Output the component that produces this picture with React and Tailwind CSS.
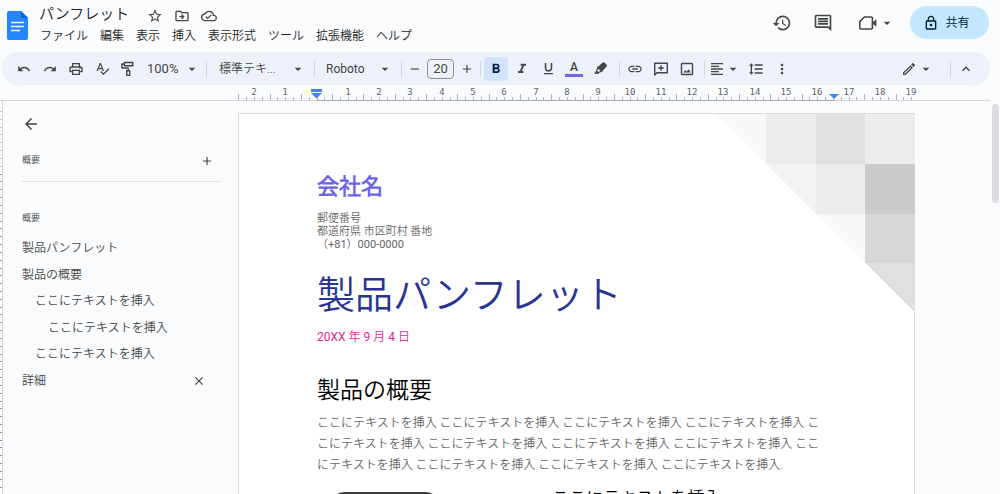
import {
  MdAdd,
  MdArrowBack,
  MdArrowDropDown,
  MdClose,
  MdFormatAlignLeft,
  MdFormatBold,
  MdFormatItalic,
  MdFormatLineSpacing,
  MdFormatUnderlined,
  MdHistory,
  MdKeyboardArrowUp,
  MdLink,
  MdMoreVert,
  MdOutlineCloudDone,
  MdOutlineComment,
  MdOutlineDriveFileMove,
  MdOutlineEdit,
  MdOutlineLock,
  MdOutlinePrint,
  MdRedo,
  MdRemove,
  MdSpellcheck,
  MdStarBorder,
  MdUndo,
} from 'react-icons/md';

const MENUS = ['ファイル', '編集', '表示', '挿入', '表示形式', 'ツール', '拡張機能', 'ヘルプ'];

const OUTLINE = [
  { label: '製品パンフレット', indent: 'pl-0' },
  { label: '製品の概要', indent: 'pl-0' },
  { label: 'ここにテキストを挿入', indent: 'pl-[13px]' },
  { label: 'ここにテキストを挿入', indent: 'pl-[26px]' },
  { label: 'ここにテキストを挿入', indent: 'pl-[13px]' },
  { label: '詳細', indent: 'pl-0', closable: true },
];

const BODY_TEXT = `${Array(12).fill('ここにテキストを挿入').join(' ')}.`;

const DocsLogo = () => (
  <svg viewBox="0 0 21 29" className="h-[29px] w-[21px] shrink-0">
    <path d="M2 0h12l7 7v20a2 2 0 0 1-2 2H2a2 2 0 0 1-2-2V2a2 2 0 0 1 2-2z" fill="#2684fc" />
    <path d="M14 0l7 7h-7z" fill="#0066da" />
    <path d="M4 11.5h13M4 15.5h13M4 19.5h9" stroke="#fff" strokeWidth="1.4" />
  </svg>
);

const PaintRollerIcon = () => (
  <svg viewBox="0 0 16 16" className="size-4" fill="none" stroke="currentColor" strokeWidth="1.4">
    <path d="M4.4 1.5h8.4v3.2H4.4zM4.4 3H2v4h6.2v2.6M6.7 9.8h3v4.6h-3z" strokeLinejoin="round" />
  </svg>
);

const HighlighterIcon = () => (
  <svg viewBox="0 0 16 16" className="size-4" fill="none" stroke="currentColor" strokeWidth="1.3">
    <path d="M5 6.400l-1.200 3.400L2.400 12h2.800l.8-.8 2.800-1z" />
    <path d="M2 12.600l1.800-2.800 2 1.800-.8 1z" fill="currentColor" strokeWidth="0" />
    <path d="M9.800 2.200a1 1 0 0 1 1.400 0l1.800 1.700a1 1 0 0 1 0 1.400L8.800 9.700 5.200 6.400z" fill="currentColor" />
  </svg>
);

const AddCommentIcon = () => (
  <svg viewBox="0 0 16 16" className="size-4" fill="none" stroke="currentColor" strokeWidth="1.4">
    <path d="M1.7 14V2.2h12.6v9.6H3.9z" strokeLinejoin="round" />
    <path d="M8 4.2v5.6M5.2 7h5.6" />
  </svg>
);

const ImageIcon = () => (
  <svg viewBox="0 0 16 16" className="size-4" fill="none" stroke="currentColor" strokeWidth="1.4">
    <rect x="2.5" y="2.5" width="11" height="11" rx="0.8" />
    <path d="M4.5 11.5l1.8-2.4 1.4 1.6 1.9-2.4 2.2 3.2z" fill="currentColor" strokeWidth="0" />
  </svg>
);

const VideoIcon = () => (
  <svg viewBox="0 0 20 20" className="size-5" fill="none" stroke="currentColor" strokeWidth="1.6">
    <path d="M6.4 4h6.8a1.2 1.2 0 0 1 1.2 1.2v9.6a1.2 1.2 0 0 1-1.2 1.2H3a1.2 1.2 0 0 1-1.2-1.2V8.6z" strokeLinejoin="round" />
    <path d="M14.2 9.8l4.2-3.6v7.6l-4.2-3.4z" fill="currentColor" strokeWidth="0" />
  </svg>
);

const Caret = () => <MdArrowDropDown className="pointer-events-none size-4 shrink-0" />;

const Divider = () => <span className="h-4 w-px shrink-0 bg-[#d3d6dc]" />;

const ToolButton = ({ label, className = 'w-[26px]', children }) => (
  <button
    type="button"
    aria-label={label}
    className={`flex h-6 shrink-0 items-center justify-center rounded ${className}`}
  >
    {children}
  </button>
);

const ToolSelect = ({ label, value, className, textClass }) => (
  <label className={`flex shrink-0 items-center ${className}`}>
    <select aria-label={label} className={`min-w-0 flex-1 appearance-none bg-transparent ${textClass}`}>
      <option>{value}</option>
    </select>
    <Caret />
  </label>
);

const Header = () => (
  <header className="flex h-[52px] shrink-0 items-start pl-[7px] pr-[11px]">
    <div className="pt-[11px]">
      <DocsLogo />
    </div>
    <div className="ml-[11px]">
      <div className="flex h-7 items-center">
        <h1 className="text-[15px] leading-7 text-[#1f1f1f]">パンフレット</h1>
        <div className="ml-[18px] mt-1 flex gap-[11px] text-[#444746]">
          <button type="button" aria-label="スター">
            <MdStarBorder className="size-4" />
          </button>
          <button type="button" aria-label="移動">
            <MdOutlineDriveFileMove className="size-4" />
          </button>
          <button type="button" aria-label="保存済み">
            <MdOutlineCloudDone className="size-4" />
          </button>
        </div>
      </div>
      <nav className="ml-px flex gap-3 text-xs text-[#1f1f1f]">
        {MENUS.map((menu) => (
          <button key={menu} type="button" className="whitespace-nowrap">
            {menu}
          </button>
        ))}
      </nav>
    </div>
    <div className="ml-auto flex items-center pt-[6px] text-[#444746]">
      <button type="button" aria-label="変更履歴">
        <MdHistory className="size-5" />
      </button>
      <button type="button" aria-label="コメント" className="ml-[21px]">
        <MdOutlineComment className="size-5" />
      </button>
      <button type="button" aria-label="ビデオ通話" className="ml-[25px] flex items-center gap-px">
        <VideoIcon />
        <Caret />
      </button>
      <button
        type="button"
        className="ml-[15px] flex h-[33px] w-[79px] items-center justify-center gap-[6px] rounded-full bg-[#c2e7ff] pr-[6px] text-xs text-[#001d35]"
      >
        <MdOutlineLock className="size-4" />
        共有
      </button>
    </div>
  </header>
);

const Toolbar = () => (
  <div className="ml-[2px] mr-[10px] flex h-[33px] shrink-0 items-center rounded-full bg-[#edf2fa] pl-[9px] pr-[11px] text-[#444746]">
    <ToolButton label="元に戻す"><MdUndo className="size-[14px]" /></ToolButton>
    <ToolButton label="やり直し"><MdRedo className="size-[14px]" /></ToolButton>
    <ToolButton label="印刷"><MdOutlinePrint className="size-4" /></ToolButton>
    <ToolButton label="スペルチェック"><MdSpellcheck className="size-[15px]" /></ToolButton>
    <ToolButton label="書式を貼り付け"><PaintRollerIcon /></ToolButton>
    <ToolSelect label="ズーム" value="100%" className="w-[65px] pl-[6px] pr-[6px]" textClass="text-[13px] font-normal" />
    <Divider />
    <ToolSelect label="スタイル" value="標準テキ..." className="w-[107px] pl-3 pr-2" textClass="text-xs" />
    <Divider />
    <ToolSelect label="フォント" value="Roboto" className="w-[86px] pl-[11px] pr-2" textClass="text-xs font-normal" />
    <Divider />
    <ToolButton label="縮小" className="w-[25px]"><MdRemove className="size-[14px]" /></ToolButton>
    <input
      aria-label="フォントサイズ"
      defaultValue="20"
      className="h-5 w-[27px] rounded border border-[#8e918f] bg-transparent text-center text-[13px] font-normal"
    />
    <ToolButton label="拡大"><MdAdd className="size-[14px]" /></ToolButton>
    <Divider />
    <ToolButton label="太字" className="ml-[3px] w-6 bg-[#d3e3fd] text-[#041e49]">
      <MdFormatBold className="size-4" />
    </ToolButton>
    <ToolButton label="斜体" className="ml-px w-[26px]"><MdFormatItalic className="size-4" /></ToolButton>
    <ToolButton label="下線"><MdFormatUnderlined className="size-[15px]" /></ToolButton>
    <ToolButton label="文字色">
      <span className="flex w-[18px] flex-col items-center border-b-[3px] border-[#7166e8] text-xs font-medium leading-[13px]">A</span>
    </ToolButton>
    <ToolButton label="ハイライト" className="mr-1 w-[28px]"><HighlighterIcon /></ToolButton>
    <Divider />
    <ToolButton label="リンク" className="ml-[2px] w-[26px]"><MdLink className="size-4" /></ToolButton>
    <ToolButton label="コメントを追加"><AddCommentIcon /></ToolButton>
    <ToolButton label="画像"><ImageIcon /></ToolButton>
    <span className="w-1" />
    <Divider />
    <ToolButton label="配置" className="ml-[2px] w-[36px]">
      <MdFormatAlignLeft className="size-4" />
      <Caret />
    </ToolButton>
    <ToolButton label="行間隔"><MdFormatLineSpacing className="size-4" /></ToolButton>
    <ToolButton label="その他"><MdMoreVert className="size-4" /></ToolButton>
    <div className="ml-auto flex items-center">
      <ToolButton label="編集モード" className="mr-4 gap-px">
        <MdOutlineEdit className="size-4" />
        <Caret />
      </ToolButton>
      <Divider />
      <ToolButton label="メニューを隠す" className="ml-[2px] w-[26px]">
        <MdKeyboardArrowUp className="size-4" />
      </ToolButton>
    </div>
  </div>
);

// Units are quarter centimetres, the zero point sits at the left margin
const CM = 31.3;
const ZERO = 78.5;

const HorizontalRuler = () => {
  const ticks = Array.from({ length: 87 }, (_, i) => i - 10);
  return (
    <div className="mr-[10px] flex h-4 shrink-0 border-b border-[#d5d7db] pl-[238px]">
      <svg viewBox="0 0 677 16" className="h-4 w-[677px] shrink-0 overflow-visible">
        {ticks.map((k) => {
          const x = Math.round(ZERO + (k * CM) / 4);
          const major = Math.abs(k % 4) === 2;
          return (
            <rect key={k} x={x} y={major ? 9 : 12} width="1" height={major ? 6 : 3} fill="#b0b3b8" />
          );
        })}
        <rect x="79" y="15" width="518" height="1" fill="#a8abb0" />
        {[-2, -1, ...Array.from({ length: 19 }, (_, i) => i + 1)].map((n) => (
          <text
            key={n}
            x={Math.round(ZERO + n * CM)}
            y="10"
            textAnchor="middle"
            className="fill-[#5f6368] font-['DejaVu_Sans_Mono',monospace] text-[9px]"
          >
            {Math.abs(n)}
          </text>
        ))}
        <path d="M73 4h11v3H73zM73 8h11l-5.500 5.500z" fill="#4285f4" />
        <path d="M591 9h10l-5 5z" fill="#4285f4" />
      </svg>
    </div>
  );
};

const VerticalRuler = () => (
  <svg className="h-full w-[2px] shrink-0">
    {Array.from({ length: 50 }, (_, i) => (
      <rect key={i} x="0" y={10 + Math.round((i * CM) / 4)} width="2" height="1" fill={i < 8 ? '#c4c6ca' : '#8f9297'} />
    ))}
  </svg>
);

const Sidebar = () => (
  <aside className="w-[236px] shrink-0 border-l border-[#d5d7db] pl-[19px] pr-[17px] text-[#444746]">
    <button type="button" aria-label="戻る" className="mt-[14px] block">
      <MdArrowBack className="size-[18px]" />
    </button>
    <div className="mt-4 flex h-6 items-center justify-between pr-[7px]">
      <h2 className="text-[9px]">概要</h2>
      <button type="button" aria-label="概要を追加">
        <MdAdd className="size-[14px]" />
      </button>
    </div>
    <hr className="mt-2 border-[#dfe1e5]" />
    <h2 className="mt-[28px] text-[9px] leading-4">概要</h2>
    <ul className="mt-[9px] grid h-[159px] auto-rows-fr text-xs">
      {OUTLINE.map((item, i) => (
        <li key={i} className={`flex items-center justify-between pr-[15px] ${item.indent}`}>
          <a href="#">{item.label}</a>
          {item.closable && (
            <button type="button" aria-label="削除">
              <MdClose className="size-[14px]" />
            </button>
          )}
        </li>
      ))}
    </ul>
  </aside>
);

const CornerPattern = () => (
  <svg viewBox="0 0 4 4" className="absolute -right-px top-0 size-[199px]" shapeRendering="crispEdges">
    <path d="M0 0h1v1z" fill="#f8f8f8" />
    <path d="M1 0h1v1H1z" fill="#ececec" />
    <path d="M2 0h1v1H2z" fill="#e0e0e0" />
    <path d="M3 0h1v1H3z" fill="#ececec" />
    <path d="M1 1h1v1z" fill="#f3f3f3" />
    <path d="M2 1h1v1H2z" fill="#ececec" />
    <path d="M3 1h1v1H3z" fill="#cbcbcb" />
    <path d="M2 2h1v1z" fill="#f8f8f8" />
    <path d="M3 2h1v1H3z" fill="#d7d7d7" />
    <path d="M3 3h1v1z" fill="#e0e0e0" />
  </svg>
);

const Page = () => (
  <article className="relative mt-3 min-h-full w-full max-w-[677px] border border-[#dadce0] bg-white px-[78px] pt-[59px]">
    <CornerPattern />
    <p className="text-[22px] font-bold leading-[28px] text-[#6d64e8]">会社名</p>
    <address className="mt-[11px] text-[11px] not-italic leading-[13px] text-[#666]">
      郵便番号
      <br />
      都道府県 市区町村 番地
      <br />
      <span className="font-normal">（+81）000-0000</span>
    </address>
    <h2 className="mt-5 text-[38px] leading-[48px] text-[#283592]">製品パンフレット</h2>
    <p className="mt-[10px] text-xs font-normal text-[#e5258c]">20XX 年 9 月 4 日</p>
    <h3 className="mt-[30px] text-[23px] leading-[32px] text-black">製品の概要</h3>
    <p className="mt-[6px] max-w-[512px] text-xs leading-[21px] text-[#666]">{BODY_TEXT}</p>
    <div className="mt-[10px] flex">
      <div className="ml-[12px] mt-[6px] h-[200px] w-[112px] rounded-2xl border-2 border-[#3c3c3c]" />
      <h4 className="ml-[111px] text-[17px] leading-6 text-black">ここにテキストを挿入</h4>
    </div>
  </article>
);

export default function App() {
  return (
    <div
      lang="ja"
      className="flex h-screen flex-col overflow-hidden bg-[#f9fbfd] font-['Roboto','Noto_Sans_CJK_JP_DemiLight','Noto_Sans_CJK_JP',sans-serif] font-[350]"
    >
      <Header />
      <Toolbar />
      <HorizontalRuler />
      <div className="flex min-h-0 flex-1">
        <VerticalRuler />
        <Sidebar />
        <main className="min-w-0 flex-1 overflow-hidden">
          <Page />
        </main>
        <div className="w-2 shrink-0 pt-[3px]">
          <div className="h-[99px] w-[7px] rounded-full bg-[#dadce0]" />
        </div>
      </div>
    </div>
  );
}
